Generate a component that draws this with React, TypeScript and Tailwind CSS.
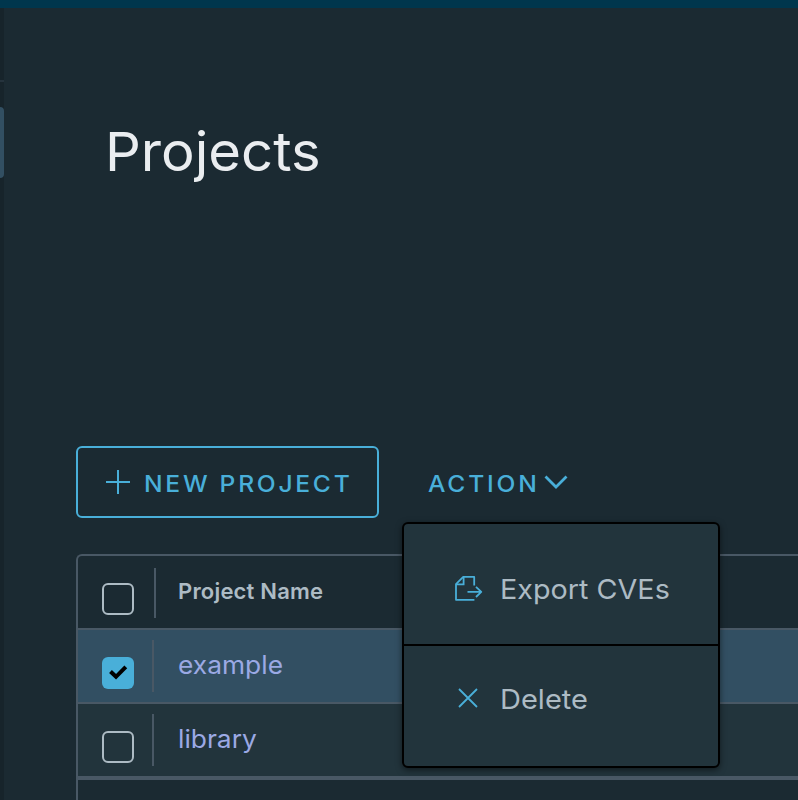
import React from "react";

function Checkbox({ checked = false }: { checked?: boolean }) {
  return checked ? (
    <span className="flex size-8 items-center justify-center rounded-[6px] bg-[#49afd9]">
      <svg viewBox="0 0 32 32" className="size-8" fill="none" stroke="#000" strokeWidth="4">
        <path d="M8.5 14.5 L14 19.8 L23.8 9.8" />
      </svg>
    </span>
  ) : (
    <span className="block size-8 rounded-[6px] border-2 border-[#adbbc4]" />
  );
}

function ExportIcon() {
  return (
    <svg viewBox="0 0 36 36" className="mt-[2px] size-9" fill="none" stroke="#49afd9" strokeWidth="1.8">
      <path d="M24.2 14.5 V5.9 H13.2 L6 13.1 V28.8 H24.4" strokeLinejoin="round" />
      <path d="M13.6 5.9 V13.3 H6" />
      <path d="M17.5 20.8 H31.5 M26 15.8 L31.3 20.9 L26 26" strokeLinejoin="round" />
    </svg>
  );
}

function ProjectRow({ name, checked, tone }: { name: string; checked?: boolean; tone: string }) {
  return (
    <div className={`flex h-[72px] ${tone}`}>
      <div className="w-[74px] pt-[27px] pl-6">
        <Checkbox checked={checked} />
      </div>
      <div className="mt-[10px] h-[52px] w-[2px] bg-[#495865]" />
      <a className="mt-[17px] ml-[24px] h-9 origin-left scale-x-[1.055] text-[25px] leading-9 text-[#9ba9e4]">{name}</a>
    </div>
  );
}

export default function App() {
  return (
    <div className="flex h-[800px] w-[798px] flex-col overflow-hidden bg-[#1b2a32] font-['Inter',sans-serif]">
      <header className="h-2 shrink-0 bg-[#00364d]" />
      <div className="flex min-h-0 flex-1">
        <nav className="w-1 shrink-0 bg-[#17242b]">
          <div className="mt-[72px] h-[2px] bg-[#25333d]" />
          <div className="mt-[25px] h-[71px] rounded-r-[6px] bg-[#324f62]" />
        </nav>
        <main className="flex min-w-0 flex-1 flex-col pl-[72px]">
          <h1 className="mt-[109px] ml-[29px] origin-left scale-x-[1.04] text-[54px] leading-[70px] font-normal text-[#eaedf0]">Projects</h1>
          <div className="relative mt-[259px] flex h-[72px] shrink-0">
            <button className="flex w-[303px] items-center rounded-[6px] border-2 border-[#49afd9] pl-[27px] text-[#49afd9]">
              <svg viewBox="0 0 26 26" className="mt-[2px] size-[26px]" stroke="#49afd9" strokeWidth="2">
                <path d="M1 12 H25 M13 0 V24" />
              </svg>
              <span className="mt-[3px] ml-[13px] origin-left scale-x-[1.07] text-[23px] leading-8 font-medium tracking-[2.55px] whitespace-nowrap">NEW PROJECT</span>
            </button>
            <button className="ml-[49px] flex items-center text-[#49afd9]">
              <span className="mt-[3px] origin-left scale-x-[1.07] text-[23px] leading-8 font-medium tracking-[2.6px]">ACTION</span>
              <svg viewBox="0 0 24 16" className="ml-[12px] h-4 w-6" fill="none" stroke="#49afd9" strokeWidth="2.8">
                <path d="M1.5 2.5 L12 13 L22.5 2.5" />
              </svg>
            </button>
            <div className="absolute top-[76px] left-[326px] z-10 flex h-[246px] w-[318px] flex-col rounded-[6px] border-2 border-black bg-[#22343c] text-[27.5px] text-[#adbbc4] shadow-[0_2px_6px_rgba(0,0,0,0.5)]">
              <div className="flex h-[122px] items-center border-b-2 border-black pt-[8px] pl-[46px]">
                <ExportIcon />
                <span className="mt-[4px] ml-[14px] origin-left scale-x-[1.045] whitespace-nowrap">Export CVEs</span>
              </div>
              <div className="flex flex-1 items-start pt-[33px] pl-[54px]">
                <svg viewBox="0 0 20 20" className="mt-[9px] size-5" stroke="#49afd9" strokeWidth="1.8">
                  <path d="M1 1 L19 19 M19 1 L1 19" />
                </svg>
                <span className="ml-[22px] origin-left scale-x-[1.055] leading-10">Delete</span>
              </div>
            </div>
          </div>
          <section className="mt-9 -mr-2 flex min-h-0 flex-1 flex-col rounded-tl-[6px] border-t-2 border-l-2 border-[#495865]">
            <div className="flex h-[72px] shrink-0">
              <div className="w-[76px] pt-[27px] pl-6">
                <Checkbox />
              </div>
              <div className="mt-3 h-[50px] w-[2px] bg-[#495865]" />
              <div className="pt-[19px] pl-[22px] text-[22px] leading-8 font-semibold tracking-[0.2px] text-[#adbbc4]">Project Name</div>
            </div>
            <div className="flex shrink-0 flex-col gap-[2px] border-t-2 border-b-4 border-[#495865] bg-[#495865]">
              <ProjectRow name="example" checked tone="bg-[#324f62]" />
              <ProjectRow name="library" tone="bg-[#22343c]" />
            </div>
          </section>
        </main>
      </div>
    </div>
  );
}
